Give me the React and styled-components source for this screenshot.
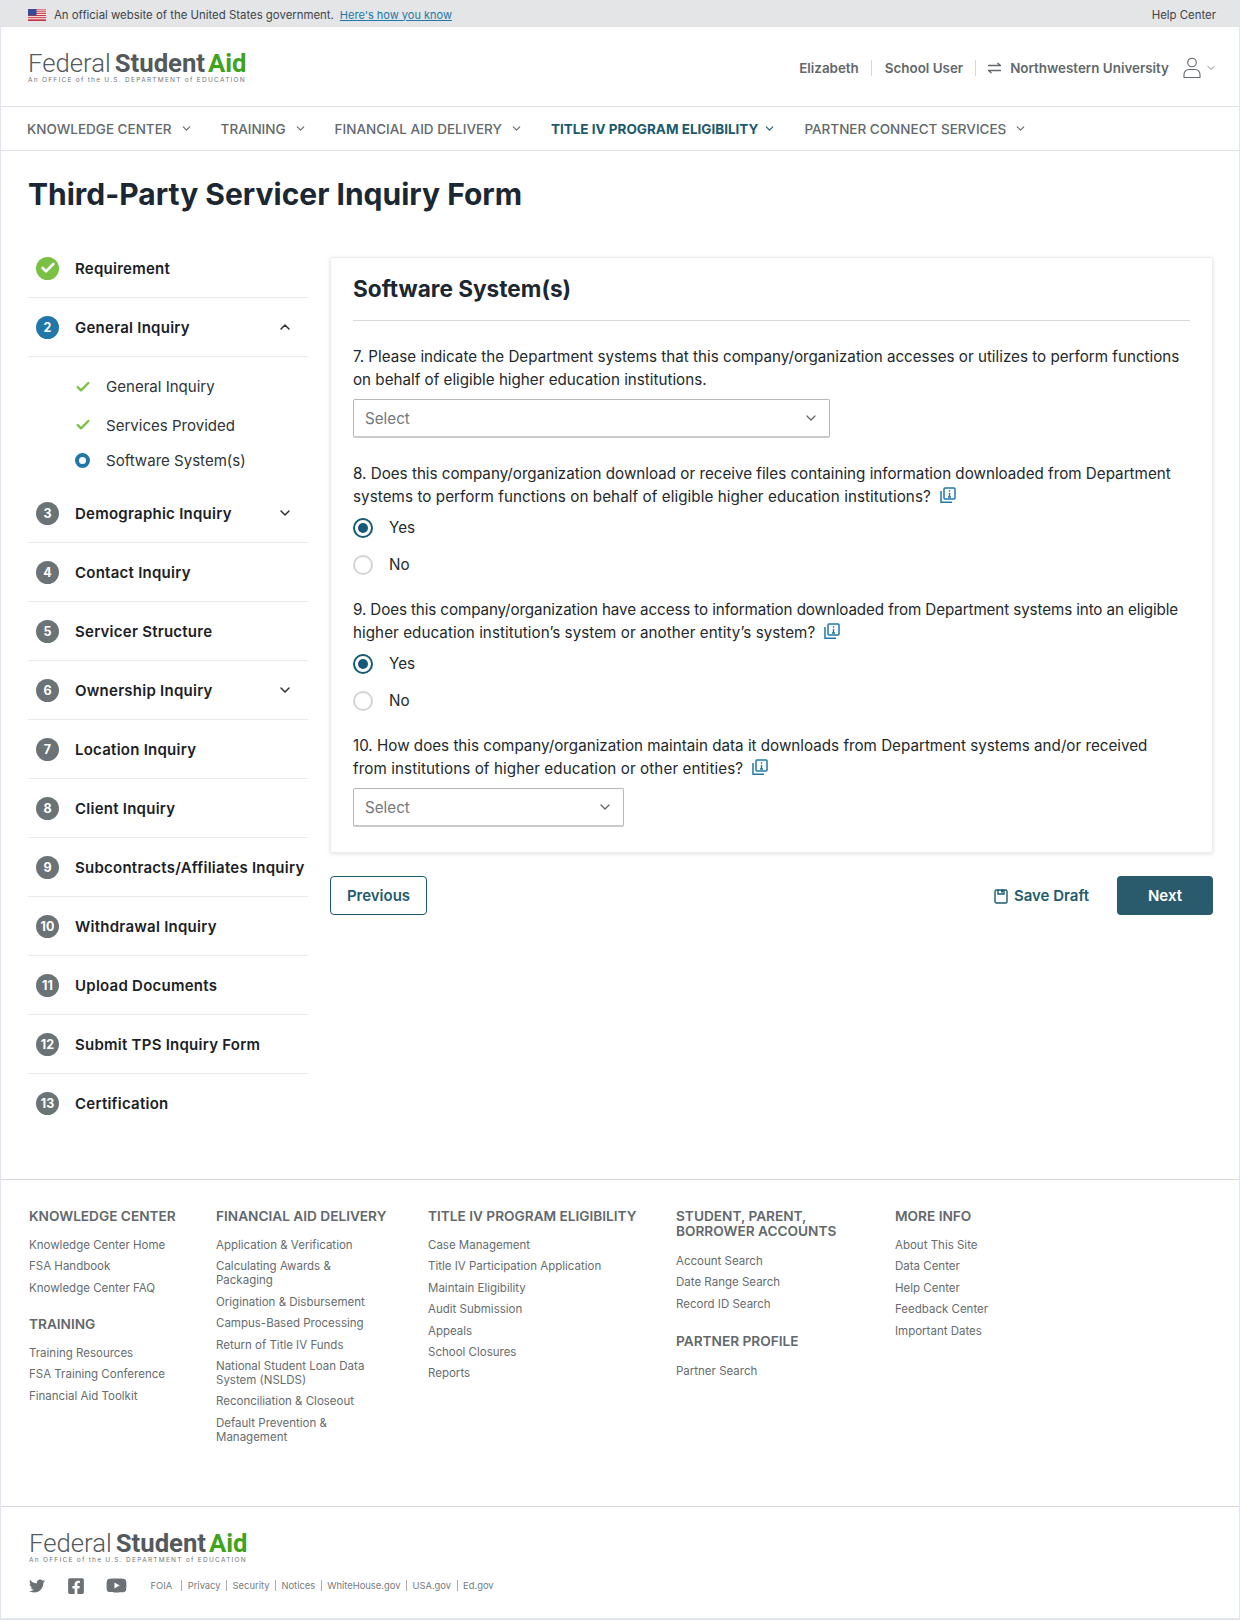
import React from "react";
import styled, { createGlobalStyle } from "styled-components";
import { ChevronDown, ChevronUp, Check } from "lucide-react";
import { FaTwitter, FaFacebookSquare, FaYoutube } from "react-icons/fa";

const FONT = `Inter, "Liberation Sans", sans-serif`;

const GlobalStyle = createGlobalStyle`
  html, body { margin: 0; padding: 0; background: #fff; }
  body { font-family: ${FONT}; color: #1b2733; }
  * { box-sizing: border-box; }
`;

const Page = styled.div`
  width: 1240px;
  height: 1620px;
  overflow: hidden;
  background: #fff;
  border: solid #e4e5ec;
  border-width: 1px 1px 2px 1px;
`;

const Banner = styled.div`
  height: 26px;
  background: #e4e5e7;
  display: flex;
  align-items: center;
  padding: 1px 23px 0 27px;
  font-size: 11.4px;
  color: #3d4449;
`;
const BannerLink = styled.a`
  color: #2278a8;
  font-size: 11px;
  text-decoration: underline;
  margin-left: 6px;
`;
const BannerRight = styled.span`
  margin-left: auto;
`;
const Flag = styled.svg`
  width: 18px;
  height: 12px;
  margin-right: 8px;
`;

const Header = styled.header`
  height: 80px;
  display: flex;
  align-items: center;
  justify-content: space-between;
  padding: 0 22px 0 27px;
  border-bottom: 1px solid #e0e1e3;
`;
const Logo = styled.div`
  display: flex;
  flex-direction: column;
  width: 220px;
`;
const LogoMark = styled.div`
  font-family: Roboto, "Liberation Sans", sans-serif;
  font-size: 25.7px;
  line-height: 26px;
  color: #53595d;
  white-space: nowrap;
`;
const LogoFederal = styled.span`
  font-weight: 300;
  margin-right: 4px;
`;
const LogoStudent = styled.span`
  font-weight: 700;
  margin-right: 3px;
`;
const LogoAid = styled.span`
  font-weight: 700;
  color: #3fa31e;
`;
const LogoTag = styled.div`
  font-size: 6.5px;
  line-height: 8px;
  color: #6f7579;
  letter-spacing: 1.27px;
  white-space: nowrap;
`;
const UserBar = styled.div`
  display: flex;
  align-items: center;
  padding-top: 2px;
  font-size: 13.4px;
  font-weight: 600;
  color: #62686c;
`;
const UserSep = styled.span`
  width: 1px;
  height: 16px;
  background: #d4d6d8;
  margin: 0 ${(p) => p.$gap}px;
`;

const Nav = styled.nav`
  height: 44px;
  display: flex;
  align-items: center;
  gap: 28px;
  padding-left: 26px;
  border-bottom: 1px solid #e0e1e3;
`;
const NavItem = styled.div`
  display: flex;
  align-items: center;
  gap: ${(p) => (p.$active ? 5 : 8)}px;
  font-size: 13.5px;
  font-weight: ${(p) => (p.$active ? 700 : 500)};
  color: ${(p) => (p.$active ? "#1a5a6e" : "#62686c")};
  white-space: nowrap;
`;

const Title = styled.h1`
  margin: 0;
  padding: 22px 0 0 27px;
  height: 88px;
  font-size: 30px;
  line-height: 42px;
  font-weight: 700;
  color: #1b2733;
`;

const Main = styled.div`
  display: flex;
  align-items: flex-start;
  padding-left: 27px;
  height: 940px;
`;

const Sidebar = styled.aside`
  width: 280px;
  margin-right: 22px;
`;
const StepRow = styled.div`
  height: 59px;
  display: flex;
  align-items: center;
  padding: 0 15px 0 8px;
  border-bottom: ${(p) => (p.$last ? "none" : "1px solid #e8e9ea")};
`;
const StepBadge = styled.span`
  width: 23px;
  height: 23px;
  flex: none;
  border-radius: 50%;
  display: flex;
  align-items: center;
  justify-content: center;
  background: ${(p) => p.$color};
  color: #fff;
  font-size: 12.5px;
  font-weight: 700;
  margin-right: 16px;
`;
const StepLabel = styled.span`
  flex: 1;
  font-size: 15px;
  letter-spacing: 0.25px;
  font-weight: 600;
  color: #1b2126;
  white-space: nowrap;
`;
const SubList = styled.div`
  padding: 10px 0 7px 47px;
`;
const SubRow = styled.div`
  height: ${(p) => p.$h}px;
  display: flex;
  align-items: center;
  font-size: 15.05px;
  color: #2f3539;
`;
const SubIcon = styled.span`
  width: 31px;
  display: flex;
  align-items: center;
`;
const Ring = styled.span`
  width: 15px;
  height: 15px;
  border: 4px solid #2178a8;
  border-radius: 50%;
`;

const Content = styled.div`
  width: 883px;
  margin-top: 18px;
`;
const Card = styled.section`
  height: 596px;
  padding: 0 22px;
  border: 1px solid #eceded;
  border-radius: 2px;
  box-shadow: 0 1px 4px rgba(0, 0, 0, 0.12);
`;
const CardTitle = styled.h2`
  margin: 0 0 24px;
  height: 63px;
  line-height: 62px;
  font-size: 22.6px;
  font-weight: 700;
  color: #1b2733;
  border-bottom: 1px solid #d6d8da;
`;
const Question = styled.p`
  margin: 0 0 ${(p) => p.$after}px;
  font-size: 15.2px;
  line-height: 23px;
  color: #23292d;
`;
const Line = styled.span`
  letter-spacing: ${(p) => p.$ls}px;
  white-space: nowrap;
`;
const Select = styled.div`
  width: ${(p) => p.$w}px;
  height: 39px;
  display: flex;
  align-items: center;
  justify-content: space-between;
  padding: 0 10px 0 11px;
  font-size: 15.2px;
  color: #72787c;
  border: 1px solid #b6b9bb;
  border-bottom: 2px solid #c8cacc;
  border-radius: 2px;
  margin-bottom: ${(p) => p.$after || 0}px;
`;
const RadioRow = styled.label`
  height: 37px;
  display: flex;
  align-items: center;
  gap: 16px;
  font-size: 15.2px;
  color: #23292d;
`;
const Radio = styled.span`
  width: 20px;
  height: 20px;
  border-radius: 50%;
  display: flex;
  align-items: center;
  justify-content: center;
  border: ${(p) => (p.$on ? "2px solid #175a78" : "2px solid #d2d4d6")};
  &::after {
    content: "";
    width: 10px;
    height: 10px;
    border-radius: 50%;
    background: ${(p) => (p.$on ? "#175a78" : "transparent")};
  }
`;
const RadioGroup = styled.div`
  margin-bottom: 15px;
`;
const InfoIcon = styled.svg`
  width: 17px;
  height: 17px;
  margin-left: 8px;
  vertical-align: -2px;
`;

const Actions = styled.div`
  display: flex;
  align-items: center;
  margin-top: 23px;
`;
const OutlineButton = styled.button`
  width: 97px;
  height: 39px;
  background: #fff;
  border: 1.5px solid #175a6c;
  border-radius: 4px;
  font: 600 15px ${FONT};
  color: #1f5b6e;
`;
const SaveDraft = styled.div`
  margin-left: auto;
  display: flex;
  align-items: center;
  gap: 6px;
  font-size: 15px;
  font-weight: 600;
  color: #1f5b6e;
  margin-right: 28px;
`;
const NextButton = styled.button`
  width: 96px;
  height: 39px;
  background: #2a5b6c;
  border: none;
  border-radius: 4px;
  font: 600 15px ${FONT};
  color: #fff;
`;

const Footer = styled.footer`
  height: 328px;
  padding: 29px 0 0 28px;
  display: flex;
  border-top: 1px solid #d6d8da;
  border-bottom: 1px solid #d6d8da;
`;
const FooterCol = styled.div`
  width: ${(p) => p.$w}px;
  flex: none;
`;
const FooterHead = styled.h3`
  margin: 0 0 ${(p) => p.$after || 14}px;
  font-size: 13.65px;
  line-height: 15px;
  font-weight: 600;
  color: #62686c;
  white-space: nowrap;
`;
const FooterLink = styled.a`
  display: block;
  font-size: 11.5px;
  line-height: 14px;
  margin-bottom: 7.4px;
  color: #666c70;
  width: ${(p) => (p.$wrap ? "160px" : "auto")};
  white-space: ${(p) => (p.$wrap ? "normal" : "nowrap")};
`;
const FooterGroup = styled.div`
  margin-bottom: ${(p) => p.$after || 0}px;
`;

const Bottom = styled.div`
  padding: 23px 0 0 28px;
`;
const SocialRow = styled.div`
  display: flex;
  align-items: center;
  margin-top: 11px;
  color: #6b7175;
`;
const SocialIcon = styled.span`
  display: flex;
  width: ${(p) => p.$w}px;
`;
const LegalLink = styled.span`
  font-size: 9.4px;
  color: #767c80;
  padding: 0 5.5px;
  padding-right: ${(p) => (p.$first ? 9 : 5.5)}px;
  border-left: ${(p) => (p.$first ? "none" : "1px solid #a9adb0")};
  line-height: 11px;
`;

const steps = [
  { n: 3, label: "Demographic Inquiry", arrow: true },
  { n: 4, label: "Contact Inquiry" },
  { n: 5, label: "Servicer Structure" },
  { n: 6, label: "Ownership Inquiry", arrow: true },
  { n: 7, label: "Location Inquiry" },
  { n: 8, label: "Client Inquiry" },
  { n: 9, label: "Subcontracts/Affiliates Inquiry" },
  { n: 10, label: "Withdrawal Inquiry" },
  { n: 11, label: "Upload Documents" },
  { n: 12, label: "Submit TPS Inquiry Form" },
  { n: 13, label: "Certification", last: true },
];

const navItems = [
  { label: "KNOWLEDGE CENTER" },
  { label: "TRAINING" },
  { label: "FINANCIAL AID DELIVERY" },
  { label: "TITLE IV PROGRAM ELIGIBILITY", active: true },
  { label: "PARTNER CONNECT SERVICES" },
];

const aidLinks = [
  ["Application & Verification"],
  ["Calculating Awards & Packaging", true],
  ["Origination & Disbursement"],
  ["Campus-Based Processing"],
  ["Return of Title IV Funds"],
  ["National Student Loan Data System (NSLDS)", true],
  ["Reconciliation & Closeout"],
  ["Default Prevention & Management", true],
];

const legal = ["FOIA", "Privacy", "Security", "Notices", "WhiteHouse.gov", "USA.gov", "Ed.gov"];

const Info = () => (
  <InfoIcon viewBox="0 0 17 17" fill="none" stroke="#2178a8" strokeWidth="1.5">
    <rect x="5" y="1" width="11" height="11" rx="1" />
    <path d="M2 4v11.2h11" />
    <path d="M10.5 3.2v1.6M10.5 6v4M9 10h3" strokeWidth="1.4" />
  </InfoIcon>
);

const LogoBlock = () => (
  <Logo>
    <LogoMark>
      <LogoFederal>Federal</LogoFederal>
      <LogoStudent>Student</LogoStudent>
      <LogoAid>Aid</LogoAid>
    </LogoMark>
    <LogoTag>An OFFICE of the U.S. DEPARTMENT of EDUCATION</LogoTag>
  </Logo>
);

const YesNo = () => (
  <RadioGroup>
    <RadioRow>
      <Radio $on />
      Yes
    </RadioRow>
    <RadioRow>
      <Radio />
      No
    </RadioRow>
  </RadioGroup>
);

const App = () => {
  return (
    <Page>
      <GlobalStyle />
      <Banner>
        <Flag viewBox="0 0 18 12">
          <rect width="18" height="12" fill="#fff" />
          <path d="M0 .9h18M0 2.8h18M0 4.6h18M0 6.5h18M0 8.3h18M0 10.2h18" stroke="#c8313e" strokeWidth="1" />
          <path d="M0 11.5h18" stroke="#c8313e" strokeWidth="1" />
          <rect width="8.5" height="6.5" fill="#3b4a94" />
        </Flag>
        An official website of the United States government.
        <BannerLink>Here's how you know</BannerLink>
        <BannerRight>Help Center</BannerRight>
      </Banner>

      <Header>
        <LogoBlock />
        <UserBar>
          Elizabeth
          <UserSep $gap={12.5} />
          School User
          <UserSep $gap={12} />
          <svg width="13" height="12" viewBox="0 0 13 12" fill="none" stroke="#62686c" strokeWidth="1.4" style={{ marginRight: 9 }}>
            <path d="M0 3.5h12.5L9.5 1M13 8.5H.5L3.5 11" />
          </svg>
          Northwestern University
          <svg width="20" height="22" viewBox="0 0 20 22" fill="none" stroke="#62686c" strokeWidth="1.1" style={{ marginLeft: 13 }}>
            <circle cx="10" cy="5.5" r="4.3" />
            <path d="M2 20.5v-3a5 5 0 0 1 5-5h6a5 5 0 0 1 5 5v3z" />
          </svg>
          <ChevronDown size={12} strokeWidth={1.6} style={{ marginLeft: 3 }} />
        </UserBar>
      </Header>

      <Nav>
        {navItems.map((item) => (
          <NavItem key={item.label} $active={item.active}>
            {item.label}
            <ChevronDown size={13} strokeWidth={2} />
          </NavItem>
        ))}
      </Nav>

      <Title>Third-Party Servicer Inquiry Form</Title>

      <Main>
        <Sidebar>
          <StepRow>
            <StepBadge $color="#7ac143">
              <Check size={16} strokeWidth={4} />
            </StepBadge>
            <StepLabel>Requirement</StepLabel>
          </StepRow>
          <StepRow>
            <StepBadge $color="#2178a8">2</StepBadge>
            <StepLabel>General Inquiry</StepLabel>
            <ChevronUp size={16} strokeWidth={2.2} color="#2b3135" />
          </StepRow>
          <SubList>
            <SubRow $h={39}>
              <SubIcon>
                <Check size={16} strokeWidth={3.5} color="#7ac143" />
              </SubIcon>
              General Inquiry
            </SubRow>
            <SubRow $h={38}>
              <SubIcon>
                <Check size={16} strokeWidth={3.5} color="#7ac143" />
              </SubIcon>
              Services Provided
            </SubRow>
            <SubRow $h={33}>
              <SubIcon>
                <Ring />
              </SubIcon>
              Software System(s)
            </SubRow>
          </SubList>
          {steps.map((s) => (
            <StepRow key={s.n} $last={s.last}>
              <StepBadge $color="#6b7376">{s.n}</StepBadge>
              <StepLabel>{s.label}</StepLabel>
              {s.arrow && <ChevronDown size={16} strokeWidth={2.2} color="#2b3135" />}
            </StepRow>
          ))}
        </Sidebar>

        <Content>
          <Card>
            <CardTitle>Software System(s)</CardTitle>
            <Question $after={8}>
              7. Please indicate the Department systems that this company/organization accesses or utilizes to perform functions on behalf of eligible higher education institutions.
            </Question>
            <Select $w={477} $after={24}>
              Select
              <ChevronDown size={16} strokeWidth={1.8} color="#5c6266" />
            </Select>
            <Question $after={1}>
              8. Does this company/organization download or receive files containing information downloaded from Department
              <br />
              <Line $ls={0.07}>systems to perform functions on behalf of eligible higher education institutions?</Line>
              <Info />
            </Question>
            <YesNo />
            <Question $after={1}>
              <Line $ls={-0.11}>
                9. Does this company/organization have access to information downloaded from Department systems into an eligible
              </Line>
              <br />
              <Line $ls={0.05}>higher education institution’s system or another entity’s system?</Line>
              <Info />
            </Question>
            <YesNo />
            <Question $after={8}>
              10. How does this company/organization maintain data it downloads from Department systems and/or received
              <br />
              <Line $ls={0.09}>from institutions of higher education or other entities?</Line>
              <Info />
            </Question>
            <Select $w={271}>
              Select
              <ChevronDown size={16} strokeWidth={1.8} color="#5c6266" />
            </Select>
          </Card>
          <Actions>
            <OutlineButton>Previous</OutlineButton>
            <SaveDraft>
              <svg width="14" height="16" viewBox="0 0 14 16" fill="none" stroke="#1f5b6e" strokeWidth="1.4">
                <rect x="1" y="2" width="12" height="13" rx="1.5" />
                <path d="M4 2v4h6V2" />
                <path d="M8 1.5v3" strokeWidth="2" />
              </svg>
              Save Draft
            </SaveDraft>
            <NextButton>Next</NextButton>
          </Actions>
        </Content>
      </Main>

      <Footer>
        <FooterCol $w={187}>
          <FooterGroup $after={22}>
            <FooterHead>KNOWLEDGE CENTER</FooterHead>
            <FooterLink>Knowledge Center Home</FooterLink>
            <FooterLink>FSA Handbook</FooterLink>
            <FooterLink>Knowledge Center FAQ</FooterLink>
          </FooterGroup>
          <FooterGroup>
            <FooterHead>TRAINING</FooterHead>
            <FooterLink>Training Resources</FooterLink>
            <FooterLink>FSA Training Conference</FooterLink>
            <FooterLink>Financial Aid Toolkit</FooterLink>
          </FooterGroup>
        </FooterCol>
        <FooterCol $w={212}>
          <FooterHead>FINANCIAL AID DELIVERY</FooterHead>
          {aidLinks.map(([label, wrap]) => (
            <FooterLink key={label} $wrap={wrap}>
              {label}
            </FooterLink>
          ))}
        </FooterCol>
        <FooterCol $w={248}>
          <FooterHead>TITLE IV PROGRAM ELIGIBILITY</FooterHead>
          <FooterLink>Case Management</FooterLink>
          <FooterLink>Title IV Participation Application</FooterLink>
          <FooterLink>Maintain Eligibility</FooterLink>
          <FooterLink>Audit Submission</FooterLink>
          <FooterLink>Appeals</FooterLink>
          <FooterLink>School Closures</FooterLink>
          <FooterLink>Reports</FooterLink>
        </FooterCol>
        <FooterCol $w={219}>
          <FooterGroup $after={23}>
            <FooterHead $after={15}>
              STUDENT, PARENT,
              <br />
              BORROWER ACCOUNTS
            </FooterHead>
            <FooterLink>Account Search</FooterLink>
            <FooterLink>Date Range Search</FooterLink>
            <FooterLink>Record ID Search</FooterLink>
          </FooterGroup>
          <FooterGroup>
            <FooterHead $after={15}>PARTNER PROFILE</FooterHead>
            <FooterLink>Partner Search</FooterLink>
          </FooterGroup>
        </FooterCol>
        <FooterCol $w={120}>
          <FooterHead>MORE INFO</FooterHead>
          <FooterLink>About This Site</FooterLink>
          <FooterLink>Data Center</FooterLink>
          <FooterLink>Help Center</FooterLink>
          <FooterLink>Feedback Center</FooterLink>
          <FooterLink>Important Dates</FooterLink>
        </FooterCol>
      </Footer>

      <Bottom>
        <LogoBlock />
        <SocialRow>
          <SocialIcon $w={38}>
            <FaTwitter size={16} />
          </SocialIcon>
          <SocialIcon $w={39}>
            <FaFacebookSquare size={18} />
          </SocialIcon>
          <SocialIcon $w={39}>
            <FaYoutube size={21} />
          </SocialIcon>
          {legal.map((l, i) => (
            <LegalLink key={l} $first={i === 0}>
              {l}
            </LegalLink>
          ))}
        </SocialRow>
      </Bottom>
    </Page>
  );
};

export default App;
